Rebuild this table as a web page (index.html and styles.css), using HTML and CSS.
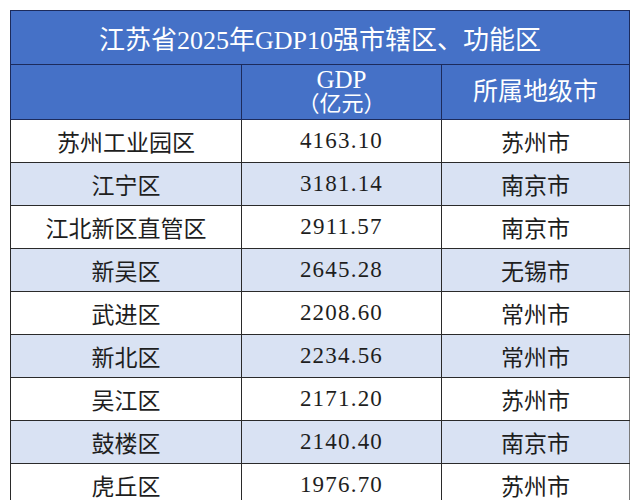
FILE: index.html
```html
<!DOCTYPE html>
<html lang="zh-CN">
<head>
<meta charset="utf-8">
<title>江苏省2025年GDP10强市辖区、功能区</title>
<link rel="stylesheet" href="styles.css">
</head>
<body>
<div class="sheet">
  <table class="gdp">
    <colgroup>
      <col class="col-name">
      <col class="col-gdp">
      <col class="col-city">
    </colgroup>
    <thead>
      <tr class="title-row">
        <th colspan="3" class="title">江苏省2025年GDP10强市辖区、功能区</th>
      </tr>
      <tr class="head-row">
        <th></th>
        <th><span class="gdp-label">GDP</span><span class="unit">（亿元）</span></th>
        <th>所属地级市</th>
      </tr>
    </thead>
    <tbody>
      <tr><td>苏州工业园区</td><td class="num">4163.10</td><td>苏州市</td></tr>
      <tr class="alt"><td>江宁区</td><td class="num">3181.14</td><td>南京市</td></tr>
      <tr><td>江北新区直管区</td><td class="num">2911.57</td><td>南京市</td></tr>
      <tr class="alt"><td>新吴区</td><td class="num">2645.28</td><td>无锡市</td></tr>
      <tr><td>武进区</td><td class="num">2208.60</td><td>常州市</td></tr>
      <tr class="alt"><td>新北区</td><td class="num">2234.56</td><td>常州市</td></tr>
      <tr><td>吴江区</td><td class="num">2171.20</td><td>苏州市</td></tr>
      <tr class="alt"><td>鼓楼区</td><td class="num">2140.40</td><td>南京市</td></tr>
      <tr><td>虎丘区</td><td class="num">1976.70</td><td>苏州市</td></tr>
    </tbody>
  </table>
</div>
</body>
</html>
```

FILE: styles.css
```css
html, body {
  margin: 0;
  padding: 0;
  background: #ffffff;
  height: 500px;
  overflow: hidden;
}

.sheet {
  padding: 10px 0 0 10px;
  font-family: "Liberation Serif", "Noto Sans CJK SC", serif;
  color: #1e1e1e;
}

.gdp {
  border-collapse: collapse;
  table-layout: fixed;
  width: 619px;
}

.col-name { width: 231px; }
.col-gdp { width: 200px; }
.col-city { width: 188px; }

.gdp th,
.gdp td {
  padding: 0;
  text-align: center;
  vertical-align: middle;
  font-weight: normal;
  white-space: nowrap;
}

.title-row th {
  height: 53px;
  background: #4571c7;
  color: #ffffff;
  font-size: 26px;
  border: 1px solid #1c2b5c;
}

.head-row th {
  height: 54px;
  background: #4571c7;
  color: #ffffff;
  font-size: 25px;
  border: 1px solid #1c2b5c;
  line-height: 24px;
}

.gdp-label,
.unit {
  display: block;
}

.unit {
  font-size: 22px;
}

.gdp td {
  height: 42px;
  font-size: 23px;
  border: 1px solid #2a2a2a;
}

.gdp td:last-child {
  border-right-color: #7a7a7a;
}

.gdp td.num {
  letter-spacing: 1.2px;
}

.gdp tr.alt td {
  background: #d9e2f3;
}
```
